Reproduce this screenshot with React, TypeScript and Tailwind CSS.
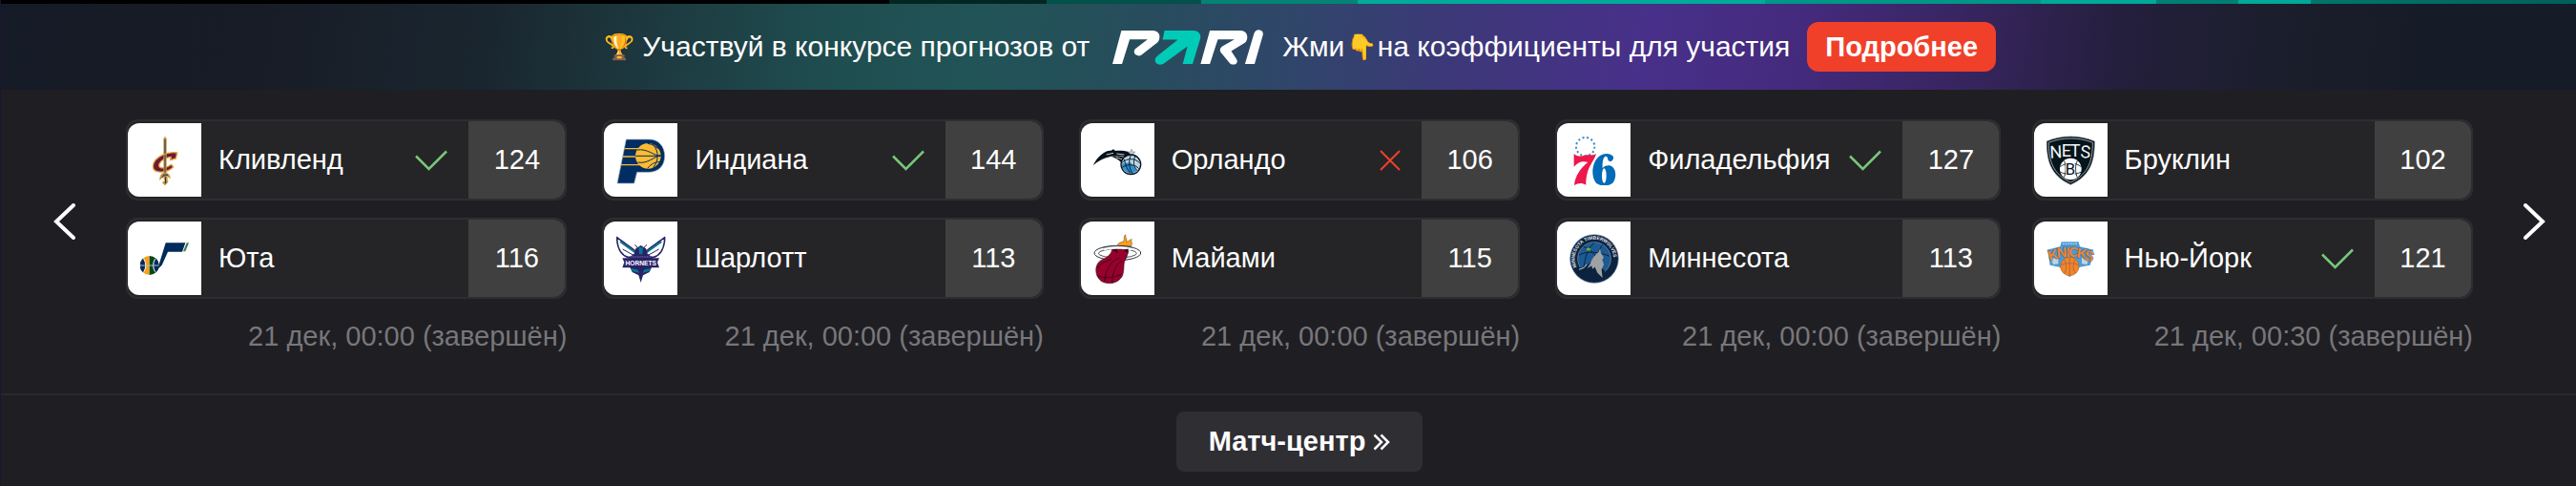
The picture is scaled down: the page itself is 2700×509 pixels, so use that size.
import type { ReactNode } from "react";

function Logo({ label, children }: { label: string; children: ReactNode }) {
  return (
    <svg viewBox="0 0 156 156" className="size-[52px]" role="img" aria-label={label}>
      {children}
    </svg>
  );
}

const cavaliers = (
  <Logo label="Кливленд">
    <path d="M73 10 78 2 83 10V72H73Z" fill="#c59a48" />
    <path d="M78 12V70" stroke="#1b2746" strokeWidth="3" />
    <path d="M116 54C88 49 42 66 40 96C39 119 80 121 104 99L98 91C82 103 60 106 59 94C60 80 82 68 97 67L94 77L112 72Z" fill="#6f1735" stroke="#e0a83f" strokeWidth="4" strokeLinejoin="round" />
    <path d="M73 58H83V122H73Z" fill="#c59a48" />
    <path d="M78 60V120" stroke="#3c3548" strokeWidth="3" />
    <path d="M61 140C62 120 72 116 79 117C88 117 94 124 94 134L84 128L87 146L78 157L69 147L76 143L74 128Z" fill="#b18b42" stroke="#e2b75e" strokeWidth="2" />
    <path d="M79 130 80 150M70 132 75 123 87 124" stroke="#242f50" strokeWidth="3" fill="none" />
  </Logo>
);

const jazz = (
  <Logo label="Юта">
    <defs>
      <clipPath id="jazz-ball">
        <circle cx="29" cy="99" r="30" />
      </clipPath>
    </defs>
    <path d="M80 28H142L132 56H87L68 98 54 112Z" fill="#002b5c" />
    <path d="M146 28H153L142 55H135Z" fill="#3e7d55" />
    <g clipPath="url(#jazz-ball)">
      <path d="M-1 69H29V129H-1Z" fill="#f9a01b" />
      <path d="M29 69H60V129H29Z" fill="#00471b" />
      <ellipse cx="-1" cy="99" rx="18" ry="27" fill="#002b5c" stroke="#fff" strokeWidth="3" />
      <ellipse cx="59" cy="99" rx="18" ry="27" fill="#002b5c" stroke="#fff" strokeWidth="3" />
      <path d="M0 99H60" stroke="#a9bcc8" strokeWidth="3" />
    </g>
  </Logo>
);

const pacers = (
  <Logo label="Индиана">
    <path d="M31 12H103C133 12 152 34 152 64C152 96 132 115 101 115H65L56 150H3Z" fill="#002d62" stroke="#9aa9bf" strokeWidth="2" />
    <circle cx="100" cy="64" r="40" fill="#fdbb30" />
    <path d="M26 41H70M20 66H140M14 92H74" stroke="#fdbb30" strokeWidth="4" />
    <path d="M60 64H140M66 45C96 40 118 62 140 66M68 84C96 90 118 68 140 60M98 25C116 26 126 38 138 44M98 103C110 88 122 84 136 82M116 28C134 50 134 78 116 101" stroke="#002d62" strokeWidth="3" fill="none" />
  </Logo>
);

const hornets = (
  <Logo label="Шарлотт">
    <path d="M2 11C26 30 48 42 67 60L58 73H36C14 66 2 42 2 11Z" fill="#fff" stroke="#2a2268" strokeWidth="5" strokeLinejoin="round" />
    <path d="M152 11C128 30 106 42 87 60L96 73H118C140 66 152 42 152 11Z" fill="#fff" stroke="#2a2268" strokeWidth="5" strokeLinejoin="round" />
    <path d="M12 24 62 60M142 24 92 60" stroke="#00788c" strokeWidth="6" />
    <path d="M20 48 56 68M134 48 98 68" stroke="#2a2268" strokeWidth="3" />
    <path d="M58 34 68 44M96 34 86 44" stroke="#2a2268" strokeWidth="3" />
    <path d="M61 46 77 36 93 46 98 62 114 74V98L104 120 84 130 77 153 70 130 50 120 40 98V74L56 62Z" fill="#2a2268" />
    <path d="M70 42H84L82 64H72ZM44 108 66 112 72 122 52 118ZM110 108 88 112 82 122 102 118Z" fill="#00788c" />
    <path d="M46 72H108" stroke="#9ab4ca" strokeWidth="2" strokeDasharray="3 2" />
    <path d="M19 76H135L129 89 135 106H19L25 89Z" fill="#2a2268" />
    <text x="77" y="98" textAnchor="middle" fontSize="20" fontWeight="bold" fill="#fff" className="font-['Liberation_Sans',sans-serif]">HORNETS</text>
  </Logo>
);

const magic = (
  <Logo label="Орландо">
    <path d="M2 94C16 64 40 46 58 47L66 43 72 48C96 46 126 50 142 70L124 74C92 56 36 60 2 94Z" fill="#07121a" />
    <path d="M60 66C84 62 106 68 114 78L98 94C92 82 78 72 60 66Z" fill="#07121a" />
    <path d="M44 60 66 55M76 57 100 60M74 68 98 76" stroke="#c4ced4" strokeWidth="3" fill="none" />
    <path d="M123 42 126 51 135 51 128 57 131 66 123 60 115 66 118 57 111 51H120Z" fill="#c4ced4" stroke="#3b4c58" strokeWidth="1" />
    <circle cx="121" cy="91" r="31" fill="#bcd3e2" stroke="#07121a" strokeWidth="4" />
    <path d="M93 88 120 84 140 110A28 28 0 0 1 95 101Z" fill="#2f8fd0" />
    <path d="M93 85C110 70 132 70 149 86M93 100C112 88 134 90 146 104M121 62C112 80 116 106 126 120M134 65C126 84 132 104 142 110M100 75C104 94 112 110 120 119" stroke="#0a2233" strokeWidth="3" fill="none" />
  </Logo>
);

const heat = (
  <Logo label="Майами">
    <path d="M80 38C76 30 88 27 97 24C103 18 96 8 104 2C102 10 110 16 107 25C114 24 116 18 124 17C118 23 128 27 122 38Z" fill="#f9a01b" stroke="#8a5a18" strokeWidth="2" />
    <ellipse cx="79" cy="60" rx="73" ry="23" fill="#fff" stroke="#26343c" strokeWidth="3" />
    <ellipse cx="79" cy="61" rx="60" ry="14" fill="#fff" stroke="#26343c" strokeWidth="2.5" />
    <path d="M62 48C60 62 50 72 32 80C5 92 6 130 26 147C48 162 82 156 94 132C103 108 94 92 106 77L113 56 108 46Z" fill="#98002e" stroke="#3d0f20" strokeWidth="2" />
    <path d="M33 44C58 36 102 36 128 44L120 52C98 46 60 46 38 52Z" fill="#fff" />
    <path d="M33 44C58 36 102 36 128 44" stroke="#26343c" strokeWidth="2" fill="none" />
    <path d="M66 52 75 50 76 60M100 52 110 50 109 58" stroke="#2a0b16" strokeWidth="5" fill="none" />
    <path d="M84 76C58 84 42 110 38 150M94 84C70 96 62 130 62 154M16 108C26 90 44 86 60 80M14 130C36 142 70 138 92 126" stroke="#2f0815" strokeWidth="2.5" fill="none" />
  </Logo>
);

const sixers = (
  <Logo label="Филадельфия">
    <circle cx="50" cy="35" r="29" fill="none" stroke="#3a86c8" strokeWidth="6" strokeDasharray="6 8.02" />
    <path d="M14 57C24 66 34 66 44 63C58 57 68 66 84 57C76 86 52 98 52 155C40 148 28 148 15 156C18 124 38 100 58 84C40 78 26 84 14 98Z" fill="#ed174c" />
    <path d="M138 66C128 53 104 54 90 68C70 88 68 128 82 146C92 160 126 162 138 146C150 128 146 98 126 94C118 93 108 96 104 103C103 84 106 66 114 65C120 65 120 72 122 78C128 84 140 80 138 66Z" fill="#006bb6" />
    <ellipse cx="109" cy="126" rx="7" ry="23" fill="#fff" />
  </Logo>
);

const timberwolves = (
  <Logo label="Миннесота">
    <defs>
      <path id="wolves-ring" d="M23.500 106A61 61 0 1 1 119 123" />
    </defs>
    <circle cx="78" cy="78" r="76" fill="#0c2340" stroke="#7f92a6" strokeWidth="2" />
    <text fontSize="15" fontWeight="bold" fill="#e2e8ec" className="font-['Liberation_Sans',sans-serif]">
      <textPath href="#wolves-ring" startOffset="2">MINNESOTA TIMBERWOLVES</textPath>
    </text>
    <circle cx="78" cy="78" r="52" fill="#1c5a93" stroke="#8195a8" strokeWidth="2" />
    <path d="M30 66C56 54 86 54 126 70M44 40C72 50 96 80 104 120M78 27C58 46 50 70 44 110M104 34C92 50 88 62 84 80" stroke="#0c2340" strokeWidth="3" fill="none" />
    <path d="M22 104C50 112 60 92 72 84L112 116C104 136 60 144 34 124Z" fill="#0c2340" />
    <path d="M96 46 99 60 108 74 103 80 108 96 101 112 104 138 88 122 80 104 72 110 70 100 56 108 66 92C72 74 84 64 92 56Z" fill="#9ea2a2" />
    <path d="M30 112 46 106 54 96" stroke="#c6cfd4" strokeWidth="3" fill="none" />
    <path d="M58 42 61 46 68 45 64 50 66 54 59 52 54 54 56 49 52 45H58Z" fill="#78be20" />
  </Logo>
);

const nets = (
  <Logo label="Бруклин">
    <path d="M79 3C104 3 130 8 154 18C154 72 146 124 79 154C12 124 4 72 4 18C28 8 54 3 79 3Z" fill="#06141c" stroke="#5d686e" strokeWidth="2" />
    <path d="M79 9C102 9 126 13 148 22C148 74 138 120 79 147C20 120 10 74 10 22C32 13 56 9 79 9Z" fill="none" stroke="#dfe4e6" strokeWidth="2" />
    <g fill="#f4f6f7" fontSize="54" className="font-['Roboto',sans-serif]">
      <text x="14" y="71" transform="rotate(-3 14 71)">N</text>
      <text x="50" y="66">E</text>
      <text x="77" y="66">T</text>
      <text x="109" y="69" transform="rotate(3 109 69)">S</text>
    </g>
    <circle cx="79" cy="105" r="34" fill="#fff" />
    <path d="M46 98C62 84 96 84 112 98M46 114C62 124 96 124 112 114M58 79C66 92 64 120 58 131M100 79C92 92 94 120 100 131" stroke="#06141c" strokeWidth="2.500" fill="none" />
    <path d="M64 80H92V130H64Z" fill="#fff" />
    <text x="78" y="123" textAnchor="middle" fontSize="50" fill="#06141c" className="font-['Roboto',sans-serif]">B</text>
  </Logo>
);

const knicks = (
  <Logo label="Нью-Йорк">
    <path d="M50 25H104L108 40 152 50 142 64 148 72 140 98 108 104 76 136 44 104 14 98 10 72 16 64 4 50 46 40Z" fill="#4d9bd6" />
    <path d="M18 78 40 74V94L24 96ZM114 94V74L136 78 130 96Z" fill="#c3d3dd" />
    <path d="M54 31H102" stroke="#c2daeb" strokeWidth="4" strokeDasharray="5 3" />
    <g fill="#f58426" stroke="#2f6ea8" strokeWidth="3" paintOrder="stroke" fontSize="44" fontWeight="bold" className="font-['Liberation_Sans',sans-serif]">
      <text x="12" y="84" transform="rotate(-14 12 84)">K</text>
      <text x="37" y="75" transform="rotate(-6 37 75)">N</text>
      <text x="65" y="72">I</text>
      <text x="73" y="72">C</text>
      <text x="97" y="74" transform="rotate(8 97 74)">K</text>
      <text x="119" y="80" transform="rotate(14 119 80)">S</text>
    </g>
    <circle cx="76" cy="102" r="29" fill="#f58426" stroke="#b9662a" strokeWidth="2" />
    <path d="M76 73V131M48 98C64 90 90 90 104 98M58 80C68 96 66 114 58 125M94 80C84 96 86 114 94 125" stroke="#9b6a4a" strokeWidth="2.500" fill="none" />
  </Logo>
);

type Result = "won" | "lost";

interface Team {
  name: string;
  score: number;
  logo: ReactNode;
  mark?: Result;
}

interface Match {
  teams: Team[];
  date: string;
}

const matches: Match[] = [
  {
    teams: [
      { name: "Кливленд", score: 124, logo: cavaliers, mark: "won" },
      { name: "Юта", score: 116, logo: jazz },
    ],
    date: "21 дек, 00:00 (завершён)",
  },
  {
    teams: [
      { name: "Индиана", score: 144, logo: pacers, mark: "won" },
      { name: "Шарлотт", score: 113, logo: hornets },
    ],
    date: "21 дек, 00:00 (завершён)",
  },
  {
    teams: [
      { name: "Орландо", score: 106, logo: magic, mark: "lost" },
      { name: "Майами", score: 115, logo: heat },
    ],
    date: "21 дек, 00:00 (завершён)",
  },
  {
    teams: [
      { name: "Филадельфия", score: 127, logo: sixers, mark: "won" },
      { name: "Миннесота", score: 113, logo: timberwolves },
    ],
    date: "21 дек, 00:00 (завершён)",
  },
  {
    teams: [
      { name: "Бруклин", score: 102, logo: nets },
      { name: "Нью-Йорк", score: 121, logo: knicks, mark: "won" },
    ],
    date: "21 дек, 00:30 (завершён)",
  },
];

function Mark({ result }: { result: Result }) {
  if (result === "won") {
    return (
      <svg viewBox="0 0 34 22" className="h-[22px] w-[34px] shrink-0" fill="none" stroke="#78c878" strokeWidth="2.500" role="img" aria-label="прогноз верный">
        <path d="M1 6.500 14.500 20 33 1.500" />
      </svg>
    );
  }
  return (
    <svg viewBox="0 0 22 22" className="size-[22px] shrink-0" fill="none" stroke="#f0402a" strokeWidth="2" role="img" aria-label="прогноз неверный">
      <path d="M1 1 21 21M21 1 1 21" />
    </svg>
  );
}

function TeamRow({ team }: { team: Team }) {
  return (
    <div className="flex h-[85px] overflow-hidden rounded-xl border-2 border-[#2e2e32] bg-[#252527]">
      <div className="my-0.5 flex w-[77px] shrink-0 items-center justify-center rounded-l-xl bg-white">{team.logo}</div>
      <div className="flex grow items-center justify-between gap-5 pr-[22px] pl-[18px]">
        <span>{team.name}</span>
        {team.mark && <Mark result={team.mark} />}
      </div>
      <div className="flex w-[101px] shrink-0 items-center justify-center rounded-r-xl bg-[#404040]">{team.score}</div>
    </div>
  );
}

function MatchCard({ match }: { match: Match }) {
  return (
    <a href="#match" className="flex w-max min-w-full flex-col">
      <div className="flex flex-col gap-[18px]">
        {match.teams.map((team) => (
          <TeamRow key={team.name} team={team} />
        ))}
      </div>
      <time className="mt-[21px] text-right leading-9 text-[#77777a]">{match.date}</time>
    </a>
  );
}

function PariLogo() {
  return (
    <svg viewBox="42 47 472 110" className="h-[37px] w-[158px]" role="img" aria-label="PARI">
      <g fill="#fff">
        <path d="M42 154 70 50H168C184 50 192 62 189 74 188 82 184 86 178 91L132 127C124 131 113 127 111 121 108 114 111 109 116 105L152 77H96L72 154Z" />
        <path d="M318 154 347 50H442C460 50 467 64 463 78 461 85 457 88 452 91L414 114 431 140C436 149 429 156 420 156 414 156 410 153 407 149L381 118C377 111 379 104 386 99L424 77H372L347 154Z" />
        <path d="M457 154 485 60C488 51 495 47 503 48 511 49 515 56 513 64L487 154Z" />
      </g>
      <path d="M205 50H296C312 50 320 62 317 75L293 154H262L277 99 204 152C195 159 182 157 177 149 173 141 177 134 183 129L247 78H199Z" fill="#00cbb6" />
    </svg>
  );
}

function PromoBanner() {
  return (
    <section className="flex h-[90px] items-center justify-center bg-[linear-gradient(97deg,#151b26_0%,#181c27_10%,#1a262f_19%,#1d3b41_26%,#1f4d4f_32%,#215457_38%,#254e5a_43%,#2f4669_50%,#3e377a_57%,#48308a_64%,#442a7c_70%,#382560_76%,#251f3e_82%,#1b1e2c_88%,#161c27_94%)] pl-6 text-[30px] leading-9">
      <span className="mr-2 text-[26px]">🏆</span>
      <span>Участвуй в конкурсе прогнозов от</span>
      <span className="mr-5 ml-6">
        <PariLogo />
      </span>
      <span>Жми</span>
      <span className="ml-0.5 text-[26px]">👇</span>
      <span>на коэффициенты для участия</span>
      <a href="#contest" className="ml-[18px] rounded-xl bg-[#f0402a] px-[19px] py-2 text-[29px] font-bold">
        Подробнее
      </a>
    </section>
  );
}

export default function App() {
  return (
    <div className="border-l border-[#1d1433] bg-[#1f1e23] font-['Liberation_Sans','Noto_Color_Emoji',sans-serif] text-[29px] text-white">
      <div className="h-1 bg-[linear-gradient(90deg,#000_34.5%,#032620_34.5%_40.6%,#02514a_40.6%_46.6%,#048474_46.6%_52.7%,#00ac99_52.7%_68.5%,#009787_68.5%_79.2%,#00a998_79.2%_83.7%,#008073_83.7%_86.9%,#00a998_86.9%_89.7%,#00776a_89.7%,#00605a_100%)]" />
      <PromoBanner />
      <main className="flex pl-[23px]">
        <button type="button" aria-label="Назад" className="flex w-[108px] shrink-0 items-center pl-8">
          <svg viewBox="0 0 24 38" className="h-[38px] w-6" fill="none" stroke="#fff" strokeWidth="4" strokeLinecap="round">
            <path d="M21 2 3 19 21 36" />
          </svg>
        </button>
        <div className="grid min-w-0 grow grid-cols-5 gap-x-[37px] pt-[31px]">
          {matches.map((match) => (
            <MatchCard key={match.teams[0].name} match={match} />
          ))}
        </div>
        <button type="button" aria-label="Вперёд" className="flex w-[108px] shrink-0 items-center justify-end pr-8">
          <svg viewBox="0 0 24 38" className="h-[38px] w-6" fill="none" stroke="#fff" strokeWidth="4" strokeLinecap="round">
            <path d="M3 2 21 19 3 36" />
          </svg>
        </button>
      </main>
      <footer className="mt-[42px] flex justify-center border-t-2 border-[#2a292e] pt-[17px] pb-[15px] pl-[23px]">
        <a href="#match-center" className="flex h-[63px] items-center gap-2 rounded-lg bg-[#2f2e33] px-[34px] font-bold">
          Матч-центр
          <svg viewBox="0 0 18 18" className="size-[18px]" fill="none" stroke="#fff" strokeWidth="2.500" aria-hidden="true">
            <path d="M1.500 1.500 9 9 1.500 16.500M8.500 1.500 16 9 8.500 16.500" />
          </svg>
        </a>
      </footer>
    </div>
  );
}
